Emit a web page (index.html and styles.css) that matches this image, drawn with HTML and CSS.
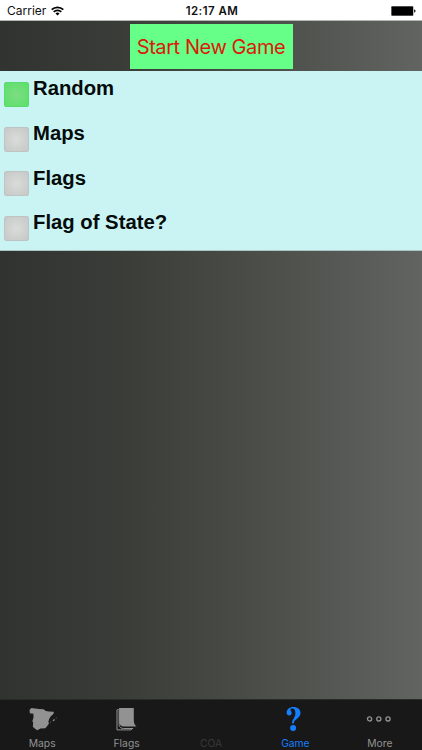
FILE: index.html
```html
<!DOCTYPE html>
<html lang="en">
<head>
<meta charset="utf-8">
<meta name="viewport" content="width=device-width, initial-scale=1">
<title>Game</title>
<link rel="stylesheet" href="styles.css">
</head>
<body>
<div class="screen">
  <header class="status">
    <div class="carrier"><span class="carrier-name">Carrier</span>
      <svg class="wifi" width="13" height="10" viewBox="0 0 13 10" fill="none" stroke="#000" stroke-width="1.7"><path d="M.7 3.7a8.2 8.2 0 0 1 11.6 0M2.7 5.9a5.4 5.4 0 0 1 7.6 0"/><path d="M6.5 9.6 4.5 7.5a2.9 2.9 0 0 1 4 0z" fill="#000" stroke="none"/></svg>
    </div>
    <div class="time">12:17 AM</div>
    <svg class="battery" width="25" height="10" viewBox="0 0 25 10"><rect width="22.6" height="10" rx="1" fill="#999"/><rect x=".6" y=".6" width="21.4" height="8.8" rx=".7"/><path d="M23.2 3.3c1.8.4 1.8 3 0 3.4z"/></svg>
  </header>
  <div class="toolbar"><button class="start">Start New Game</button></div>
  <ul class="options">
    <li class="option"><span class="box box-on"></span><span class="label">Random</span></li>
    <li class="option"><span class="box"></span><span class="label">Maps</span></li>
    <li class="option"><span class="box"></span><span class="label">Flags</span></li>
    <li class="option"><span class="box"></span><span class="label">Flag of State?</span></li>
  </ul>
  <nav class="tabs">
    <div class="tab"><div class="icon">
      <svg width="30" height="26" viewBox="0 0 30 26" fill="#929292"><path d="M2.6 2.8 4.5 1 8 1.4 12 1.9 16.5 2.3 18.8 4 22 4.6 26.8 4.8 26.6 6.8 23.6 9.4 22.2 12 21.4 14.5 22 16.5 20 19.2 18.4 21.2 13.5 21.5 10.3 23.3 8 21.8 5.8 19.8 6.2 16 5.4 14 6.5 10.5 6.4 6.8 2.8 6.3z"/><path d="m25.4 13.2 1.8-1.3.7 1-1.3 1.3zM28.3 11l1.3-.5v1.1zM23 15.4l.8-1 .6.8z"/></svg>
    </div><span class="tab-name">Maps</span></div>
    <div class="tab"><div class="icon">
      <svg width="22" height="26" viewBox="0 0 22 26"><path d="M3 2.8H1v20.1h14.2l1.1-1.5M3.1 4v14.2c.8 2.4 2.2 3.3 4.5 3.3h9.5" fill="none" stroke="#929292"/><path d="M3.1.9h14.7v12.2c0 3 .8 5 2.7 6.5H8c-2.9 0-4.9-1.6-4.9-5z" fill="#929292"/></svg>
    </div><span class="tab-name">Flags</span></div>
    <div class="tab tab-disabled"><div class="icon"></div><span class="tab-name">COA</span></div>
    <div class="tab tab-active"><div class="icon">
      <svg class="question" width="16" height="26" viewBox="0 0 16 26" fill="#147efb"><path d="M6.2 16.6C5.6 12.7 9.4 11 9.4 6.3 9.4 3.2 8.5 1.5 6.3 1.5 5 1.5 4.2 2.1 4.4 3c.2.8 1.3 1.3 1.3 3 0 1.5-1 2.5-2.5 2.5S.6 7.4.6 5.7C.6 2.3 3.5 0 7.2 0c4.5 0 7.3 2.3 7.3 5.9 0 5.6-6.900 5.900-6.700 10.700z"/><circle cx="7.1" cy="20.9" r="3"/></svg>
    </div><span class="tab-name">Game</span></div>
    <div class="tab"><div class="icon">
      <svg class="dots" width="26" height="26" viewBox="0 0 26 26" fill="none" stroke="#929292" stroke-width="1.3"><circle cx="3.6" cy="11.9" r="2.1"/><circle cx="12.8" cy="11.9" r="2.1"/><circle cx="22" cy="11.9" r="2.1"/></svg>
    </div><span class="tab-name">More</span></div>
  </nav>
</div>
</body>
</html>
```
FILE: styles.css
```css
* { box-sizing: border-box; }
body { margin: 0; }
.screen {
  width: 422px;
  height: 750px;
  display: flex;
  flex-direction: column;
  overflow: hidden;
  background: linear-gradient(90deg, #30332f 0%, #3a3c38 28%, #434541 46%, #50524e 70%, #616460 100%);
  font-family: Inter, "Liberation Sans", sans-serif;
}
.status {
  height: 21px;
  flex: none;
  display: grid;
  grid-template-columns: 1fr auto 1fr;
  align-items: center;
  padding: 0 6px 0 7px;
  background: #fff;
  border-bottom: 1px solid #b5b6b5;
  font-size: 12px;
  line-height: 20px;
  color: #111;
}
.carrier { display: flex; align-items: center; gap: 5px; padding-top: 1px; }
.wifi { margin-top: -1px; }
.time { font-weight: 600; font-size: 11.5px; letter-spacing: .45px; padding: 1px 0 0 1px; }
.battery { justify-self: end; margin-top: 1px; }
.toolbar {
  height: 50px;
  flex: none;
  display: flex;
  justify-content: center;
  padding-top: 3px;
}
.start {
  width: 163px;
  height: 45px;
  padding: 0;
  border: 0;
  background: #66ff88;
  color: #dc1a08;
  font: 400 20px/46px Inter, "Liberation Sans", sans-serif;
  letter-spacing: -.42px;
  white-space: nowrap;
}
.options {
  height: 180px;
  flex: none;
  margin: 0;
  padding: 0;
  list-style: none;
  background: #caf4f3;
  border-bottom: 1px solid #a9c6c4;
}
.option {
  height: 44.8px;
  display: flex;
  align-items: flex-start;
  gap: 4px;
  padding-left: 4px;
}
.box {
  width: 25px;
  height: 25px;
  margin-top: 10.8px;
  border-radius: 2px;
  border: 1px solid #bfc4c2;
  background: radial-gradient(circle, #dadcda, #c6c8c7);
}
.box-on { border-color: #58db6c; background: radial-gradient(circle, #7ddd83, #5be069); }
.label {
  font: 700 20.3px/24px "Liberation Sans", Arial, sans-serif;
  margin-top: 5px;
  color: #050b0b;
}
.tabs {
  height: 51px;
  flex: none;
  margin-top: auto;
  display: grid;
  grid-template-columns: repeat(5, 1fr);
  background: #181818;
  border-top: 1px solid #292a29;
}
.tab {
  display: flex;
  flex-direction: column;
  align-items: center;
  color: #929292;
}
.icon {
  height: 26px;
  margin-top: 7px;
  display: flex;
  justify-content: center;
}
.dots, .question { margin-right: 2px; }
.tab-name { font-size: 10.3px; line-height: 14px; margin-top: 3px; }
.tab-disabled { color: #383838; }
.tab-active { color: #147efb; }
```
